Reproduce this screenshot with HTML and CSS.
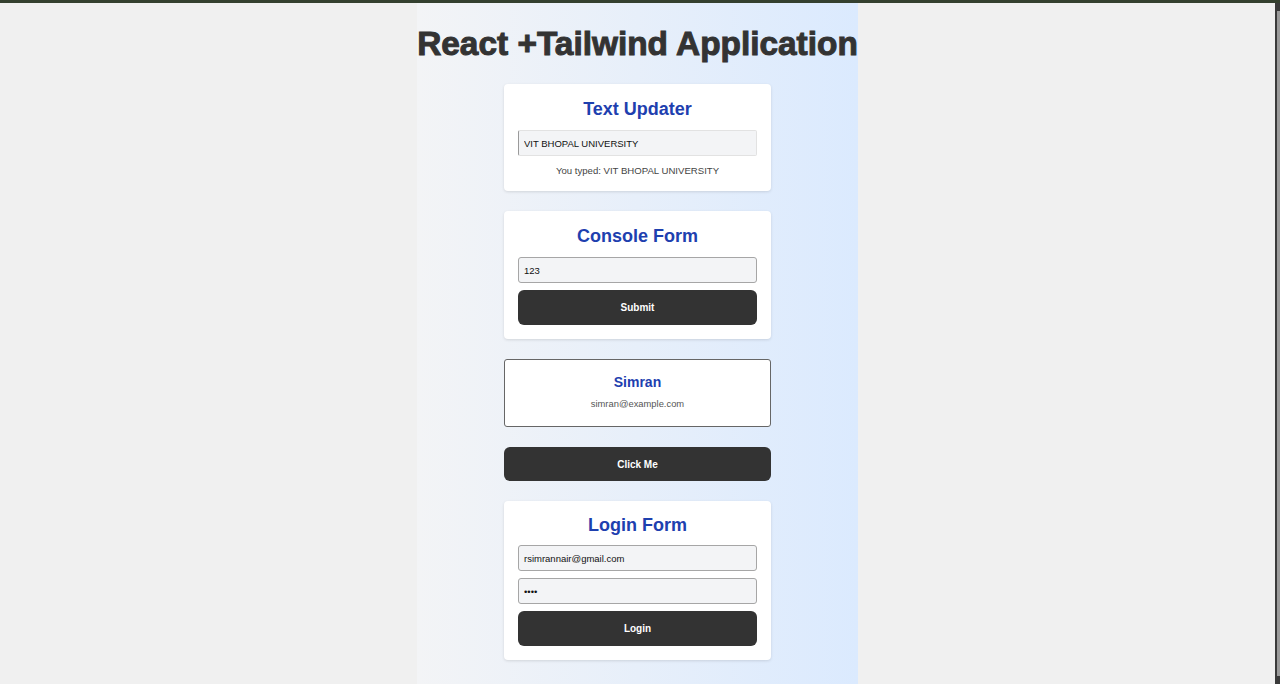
FILE: index.html
```html
<!DOCTYPE html>
<html lang="en">
<head>
<meta charset="utf-8">
<title>React + Tailwind Application</title>
<link rel="stylesheet" href="styles.css">
</head>
<body>
<div class="topline"></div>
<div class="frame">
  <main class="viewport">
    <div class="column">
      <h1 class="app-title">React +Tailwind Application</h1>

      <section class="card">
        <h2 class="card-title">Text Updater</h2>
        <input class="field field-left" type="text" value="VIT BHOPAL UNIVERSITY">
        <p class="typed">You typed: VIT BHOPAL UNIVERSITY</p>
      </section>

      <section class="card">
        <h2 class="card-title">Console Form</h2>
        <input class="field" type="text" value="123">
        <button class="btn btn-in-card">Submit</button>
      </section>

      <section class="profile">
        <h3 class="profile-name">Simran</h3>
        <p class="profile-email">simran@example.com</p>
      </section>

      <button class="btn btn-wide">Click Me</button>

      <section class="card card-last">
        <h2 class="card-title">Login Form</h2>
        <input class="field" type="email" value="rsimrannair@gmail.com">
        <input class="field" type="password" value="1234">
        <button class="btn btn-in-card">Login</button>
      </section>
    </div>
  </main>
  <div class="scrollbar"><div class="thumb"></div></div>
</div>
</body>
</html>
```

FILE: styles.css
```css
* { box-sizing: border-box; }
html, body {
  margin: 0;
  padding: 0;
  height: 684px;
  overflow: hidden;
  background: #f0f0f0;
  font-family: "Liberation Sans", Arial, sans-serif;
}
.topline {
  height: 3px;
  background: #34402f;
}
.frame {
  display: flex;
  height: 681px;
}
.viewport {
  flex: 1;
  display: flex;
  justify-content: center;
}
.scrollbar {
  width: 5px;
  background: #3a3a3a;
  padding: 8px 0 8px 2px;
}
.thumb {
  height: 100%;
  background: #9a9a9a;
}
.column {
  width: fit-content;
  background: linear-gradient(to right, #f3f4f6, #dbeafe);
  display: flex;
  flex-direction: column;
  align-items: center;
  height: 100%;
}
.app-title {
  margin: 23px 0 22px;
  font-size: 33.4px;
  line-height: 36px;
  font-weight: 700;
  color: #333333;
  -webkit-text-stroke: 1px #333333;
  white-space: nowrap;
}
.card {
  width: 267px;
  background: #ffffff;
  border-radius: 4px;
  box-shadow: 0 1px 3px rgba(0,0,0,0.12);
  padding: 14px 14px 9px;
  margin-bottom: 20px;
  display: flex;
  flex-direction: column;
  align-items: stretch;
}
.card-title {
  margin: 0 0 10px;
  text-align: center;
  font-size: 18px;
  line-height: 22px;
  font-weight: 700;
  color: #1e40af;
}
.field {
  height: 26px;
  margin: 0 0 7px;
  padding: 0 5px;
  font-family: "Liberation Sans", Arial, sans-serif;
  font-size: 9.5px;
  color: #111;
  background: #f3f4f6;
  border: 1px solid #a6a6a6;
  border-radius: 3px;
  outline: none;
}
.field-left {
  border-color: #e2e2e2 #e2e2e2 #e2e2e2 #9a9a9a;
  border-radius: 2px;
  margin-bottom: 9px;
}
.typed {
  margin: 0 0 5px;
  text-align: center;
  font-size: 9.6px;
  line-height: 12px;
  color: #444;
}
.btn {
  display: flex;
  align-items: center;
  justify-content: center;
  background: #333333;
  color: #ffffff;
  border: none;
  border-radius: 6px;
  font-family: "Liberation Sans", Arial, sans-serif;
  font-weight: 700;
  font-size: 10px;
  cursor: pointer;
}
.btn-in-card {
  height: 35px;
  margin: 0 0 5px;
}
.btn-wide {
  width: 267px;
  height: 34px;
  margin-bottom: 20px;
}
.profile {
  width: 267px;
  height: 68px;
  background: #ffffff;
  border: 1px solid #666;
  border-radius: 3px;
  margin-bottom: 20px;
  display: flex;
  flex-direction: column;
  align-items: center;
  padding-top: 14px;
}
.profile-name {
  margin: 0 0 7px;
  font-size: 14px;
  line-height: 17px;
  font-weight: 700;
  color: #1e40af;
}
.profile-email {
  margin: 0;
  font-size: 9.4px;
  line-height: 11px;
  color: #555;
}
.card-last { padding-top: 13px; padding-bottom: 9px; }
.card-last .card-title { margin-bottom: 9px; }
```
